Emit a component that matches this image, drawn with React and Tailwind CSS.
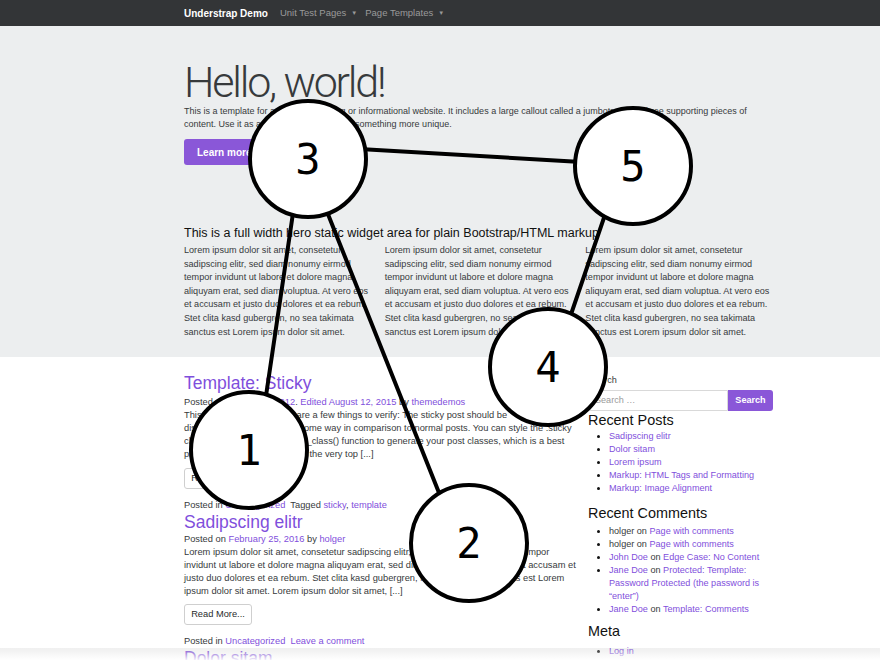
import React from "react";

const purple = "text-[#7f4fdc]";

function Bullet({ children }) {
  return (
    <li className="flex items-start h-[13px] leading-[13px]">
      <span className="w-[21px] shrink-0 flex justify-center pt-[5px]">
        <span className="block w-[3px] h-[3px] rounded-full bg-[#111]" />
      </span>
      <span>{children}</span>
    </li>
  );
}

function ReadMore({ top = "mt-[7px]" }) {
  return (
    <div className={`${top} h-[21px] w-[68px] border border-[#cfcfcf] rounded-[3px] bg-white flex items-center justify-center text-[9.3px] text-[#292b2c]`}>
      Read More...
    </div>
  );
}

function Diagram() {
  const nodes = [
    { n: "1", x: 249, y: 450 },
    { n: "2", x: 469, y: 543 },
    { n: "3", x: 308, y: 159 },
    { n: "4", x: 548, y: 367 },
    { n: "5", x: 633, y: 166 },
  ];
  return (
    <svg className="absolute inset-0 pointer-events-none" width="880" height="660">
      <g stroke="#000" strokeWidth="4" strokeLinecap="round">
        <line x1="301" y1="159" x2="258" y2="450" />
        <line x1="306" y1="159" x2="459" y2="543" />
        <line x1="308" y1="146" x2="633" y2="165" />
        <line x1="622" y1="165" x2="553" y2="367" />
      </g>
      {nodes.map((d) => (
        <g key={d.n}>
          <circle cx={d.x} cy={d.y} r="58" fill="#fff" stroke="#000" strokeWidth="4" />
          <text
            x={d.x}
            y={d.y + 15}
            textAnchor="middle"
            fontSize="42"
            fontFamily="'DejaVu Sans Mono', monospace"
            fill="#000"
          >
            {d.n}
          </text>
        </g>
      ))}
    </svg>
  );
}

const lorem =
  "Lorem ipsum dolor sit amet, consetetur sadipscing elitr, sed diam nonumy eirmod tempor invidunt ut labore et dolore magna aliquyam erat, sed diam voluptua. At vero eos et accusam et justo duo dolores et ea rebum. Stet clita kasd gubergren, no sea takimata sanctus est Lorem ipsum dolor sit amet.";

export default function App() {
  return (
    <div
      className="relative w-[880px] h-[660px] overflow-hidden bg-white text-[#373a3c]"
      style={{ fontFamily: "'Liberation Sans', Arial, sans-serif" }}
    >
      {/* Navbar */}
      <nav className="h-[26px] bg-[#333537] flex items-center pl-[184px] text-[9.5px]">
        <span className="text-white font-bold text-[10px] mr-[12px]">Understrap Demo</span>
        <span className="text-[#9a9a9a]">Unit Test Pages</span>
        <span className="text-[#9a9a9a] text-[6px] ml-[5px] mr-[8px]">▼</span>
        <span className="text-[#9a9a9a]">Page Templates</span>
        <span className="text-[#9a9a9a] text-[6px] ml-[5px]">▼</span>
      </nav>

      {/* Jumbotron + hero widgets */}
      <section className="bg-[#eceeef] h-[331px] pl-[184px] pt-[35px]">
        <div className="w-[590px]">
          <h1
            className="text-[43px] leading-[43px] font-light text-[#373a3c] tracking-[-2.2px]"
            style={{ fontFamily: "Roboto, 'Liberation Sans', sans-serif" }}
          >
            Hello, world!
          </h1>
          <p className="mt-[1px] text-[9px] leading-[13px]">
            This is a template for a simple marketing or informational website. It includes a large callout called a jumbotron and three supporting pieces of content. Use it as a starting point to create something more unique.
          </p>
          <div className="mt-[8px] inline-flex items-center h-[26px] px-[13px] rounded-[3px] bg-[#8a57d8] text-white text-[10px] font-bold">
            Learn more »
          </div>

          <h2 className="mt-[60px] text-[12.5px] leading-[16px] text-[#111]">
            This is a full width hero static widget area for plain Bootstrap/HTML markup
          </h2>
          <div className="mt-[3px] grid grid-cols-3 gap-x-[12px] text-[9.1px] leading-[13.6px]">
            <p>{lorem}</p>
            <p>{lorem}</p>
            <p>{lorem}</p>
          </div>
        </div>
      </section>

      {/* Content */}
      <div className="pl-[184px] flex gap-[12px] text-[9.3px]">
        <main className="w-[392px]">
          <article className="pt-[14px]">
            <h2 className={`text-[17.5px] leading-[24px] ${purple}`}>Template: Sticky</h2>
            <div className="mt-[1px] leading-[13px]">
              Posted on <span className={purple}>January 7, 2012</span>. <span className={purple}>Edited August 12, 2015</span> by <span className={purple}>themedemos</span>
            </div>
            <p className="leading-[13px]">
              This is a sticky post. There are a few things to verify: The sticky post should be
              <br />
              distinctively recognizable in some way in comparison to normal posts. You can style the .sticky
              <br />
              class if you are using the post_class() function to generate your post classes, which is a best
              <br />
              practice. They should show at the very top [...]
            </p>
            <ReadMore />
            <div className="mt-[10px] leading-[13px]">
              Posted in <span className={purple}>Uncategorized</span>&nbsp; Tagged <span className={purple}>sticky</span>, <span className={purple}>template</span>
            </div>
          </article>
          <article>
            <h2 className={`text-[17.5px] leading-[20px] ${purple}`}>Sadipscing elitr</h2>
            <div className="mt-[1px] leading-[13px]">
              Posted on <span className={purple}>February 25, 2016</span> by <span className={purple}>holger</span>
            </div>
            <p className="leading-[13px]">
              Lorem ipsum dolor sit amet, consetetur sadipscing elitr, sed diam nonumy eirmod tempor invidunt ut labore et dolore magna aliquyam erat, sed diam voluptua. At vero eos et accusam et justo duo dolores et ea rebum. Stet clita kasd gubergren, no sea takimata sanctus est Lorem ipsum dolor sit amet. Lorem ipsum dolor sit amet, [...]
            </p>
            <ReadMore top="mt-[6px]" />
            <div className="mt-[10px] leading-[13px]">
              Posted in <span className={purple}>Uncategorized</span>&nbsp; <span className={purple}>Leave a comment</span>
            </div>
          </article>
          <h2 className={`text-[17.5px] leading-[20px] ${purple}`}>Dolor sitam</h2>
        </main>

        <aside className="w-[185px] pt-[17px] text-[9.1px]">
          <div className="leading-[13px]">Search</div>
          <div className="mt-[3px] flex h-[21px]">
            <div className="flex-1 border border-[#d9d9d9] rounded-l-[3px] bg-white flex items-center px-[6px] text-[#9b9b9b]">
              Search …
            </div>
            <div className="w-[45px] rounded-r-[3px] bg-[#8a57d8] text-white font-bold flex items-center justify-center">
              Search
            </div>
          </div>

          <h3 className="mt-[0px] text-[14.4px] leading-[18px] text-[#111]">Recent Posts</h3>
          <ul className={`mt-[1px] ${purple}`}>
            <Bullet>Sadipscing elitr</Bullet>
            <Bullet>Dolor sitam</Bullet>
            <Bullet>Lorem ipsum</Bullet>
            <Bullet>Markup: HTML Tags and Formatting</Bullet>
            <Bullet>Markup: Image Alignment</Bullet>
          </ul>

          <h3 className="mt-[9px] text-[14.4px] leading-[18px] text-[#111]">Recent Comments</h3>
          <ul className="mt-[3px] text-[#373a3c]">
            <Bullet>holger on <span className={purple}>Page with comments</span></Bullet>
            <Bullet>holger on <span className={purple}>Page with comments</span></Bullet>
            <Bullet><span className={purple}>John Doe</span> on <span className={purple}>Edge Case: No Content</span></Bullet>
            <li className="flex items-start leading-[13px]">
              <span className="w-[21px] shrink-0 flex justify-center pt-[5px]">
                <span className="block w-[3px] h-[3px] rounded-full bg-[#111]" />
              </span>
              <span>
                <span className={purple}>Jane Doe</span> on <span className={purple}>Protected: Template: Password Protected (the password is “enter”)</span>
              </span>
            </li>
            <Bullet><span className={purple}>Jane Doe</span> on <span className={purple}>Template: Comments</span></Bullet>
          </ul>

          <h3 className="mt-[6px] text-[14.4px] leading-[18px] text-[#111]">Meta</h3>
          <ul className={`mt-[5px] ${purple}`}>
            <Bullet>Log in</Bullet>
            <Bullet>Entries RSS</Bullet>
          </ul>
        </aside>
      </div>

      <Diagram />

      <div className="absolute left-0 right-0 bottom-0 h-[12px] bg-gradient-to-b from-black/5 to-white/90 pointer-events-none" />
    </div>
  );
}
